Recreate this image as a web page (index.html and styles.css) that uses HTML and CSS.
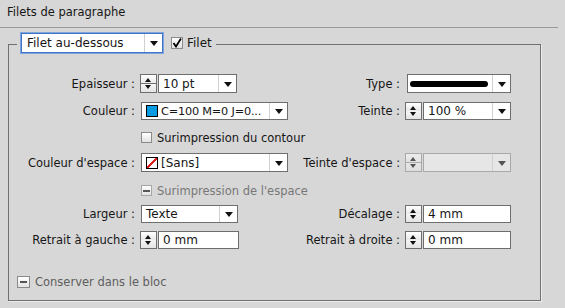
FILE: index.html
```html
<!DOCTYPE html>
<html lang="fr">
<head>
    <meta charset="UTF-8">
    <title>Filets de paragraphe</title>
    <link rel="stylesheet" href="styles.css">
</head>
<body>
    <div class="title">Filets de paragraphe</div>

    <div class="group">
        <div class="legend">
            <div class="select select-focus">
                <span class="select-text">Filet au-dessous</span>
                <span class="select-arrow"></span>
            </div>
            <span class="check">
                <svg width="10" height="10" viewBox="0 0 10 10"><path d="M1.5 5 L4 8.5 L9 0.5" fill="none" stroke="#000" stroke-width="1.8"/></svg>
            </span>
            <span class="legend-label">Filet</span>
        </div>

        <div class="row r1">
            <label class="lbl">Epaisseur :</label>
            <div class="ctl">
                <span class="spin"></span>
                <div class="select w-epaisseur">
                    <span class="select-text">10 pt</span>
                    <span class="select-arrow"></span>
                </div>
            </div>
            <label class="lbl">Type :</label>
            <div class="ctl">
                <div class="select w-type">
                    <span class="select-text"><span class="stroke-line"></span></span>
                    <span class="select-arrow"></span>
                </div>
            </div>
        </div>

        <div class="row r2">
            <label class="lbl">Couleur :</label>
            <div class="ctl">
                <div class="select w-couleur">
                    <span class="select-text"><span class="swatch swatch-cyan"></span><span class="swatch-name">C=100 M=0 J=0...</span></span>
                    <span class="select-arrow"></span>
                </div>
            </div>
            <label class="lbl">Teinte :</label>
            <div class="ctl">
                <span class="spin"></span>
                <div class="select w-teinte">
                    <span class="select-text">100 %</span>
                    <span class="select-arrow"></span>
                </div>
            </div>
        </div>

        <div class="row r3">
            <span></span>
            <div class="ctl ctl-wide">
                <span class="check"></span>
                <span class="check-label">Surimpression du contour</span>
            </div>
        </div>

        <div class="row r4">
            <label class="lbl">Couleur d'espace :</label>
            <div class="ctl">
                <div class="select w-couleur">
                    <span class="select-text"><span class="swatch swatch-none"></span>[Sans]</span>
                    <span class="select-arrow"></span>
                </div>
            </div>
            <label class="lbl">Teinte d'espace :</label>
            <div class="ctl">
                <span class="spin disabled"></span>
                <div class="select w-teinte disabled">
                    <span class="select-text"></span>
                    <span class="select-arrow"></span>
                </div>
            </div>
        </div>

        <div class="row r5">
            <span></span>
            <div class="ctl ctl-wide">
                <span class="check mixed disabled"></span>
                <span class="check-label muted">Surimpression de l'espace</span>
            </div>
        </div>

        <div class="row r6">
            <label class="lbl">Largeur :</label>
            <div class="ctl">
                <div class="select w-largeur">
                    <span class="select-text">Texte</span>
                    <span class="select-arrow"></span>
                </div>
            </div>
            <label class="lbl">Décalage :</label>
            <div class="ctl">
                <span class="spin"></span>
                <div class="field w-teinte">4 mm</div>
            </div>
        </div>

        <div class="row r7">
            <label class="lbl">Retrait à gauche :</label>
            <div class="ctl">
                <span class="spin"></span>
                <div class="field w-retrait">0 mm</div>
            </div>
            <label class="lbl">Retrait à droite :</label>
            <div class="ctl">
                <span class="spin"></span>
                <div class="field w-teinte">0 mm</div>
            </div>
        </div>

        <div class="keep">
            <span class="check mixed"></span>
            <span class="check-label muted">Conserver dans le bloc</span>
        </div>
    </div>
</body>
</html>
```

FILE: styles.css
```css
body {
    margin: 0;
    background-color: #d7d7d7;
    font-family: 'DejaVu Sans', 'Liberation Sans', sans-serif;
    font-size: 11.5px;
    color: #161616;
    width: 565px;
    height: 308px;
    overflow: hidden;
}

.title {
    line-height: 24px;
    padding-left: 7px;
    width: 558px;
    border-bottom: 1px solid #9a9a9a;
    box-sizing: border-box;
    height: 28px;
}

.group {
    margin: 16px 0 0 8px;
    width: 533px;
    height: 257px;
    box-sizing: border-box;
    border: 1px solid #707070;
    box-shadow: 1px 1px 0 #ececec;
}

.legend {
    display: flex;
    align-items: center;
    margin: -12px 0 0 8px;
    padding: 0 4px;
    background-color: #d7d7d7;
    width: max-content;
    height: 20px;
}

.legend-label {
    margin-left: 4px;
    font-size: 12px;
}

.legend .check {
    margin-left: 8px;
    width: 12px;
    height: 12px;
}

/* rows */
.row {
    display: grid;
    grid-template-columns: 126px 148px 107px 106px;
    column-gap: 5px;
    align-items: center;
}

.r1 { margin-top: 21px; height: 19px; }
.r2 { margin-top: 9px; height: 18px; }
.r3 { margin-top: 8px; height: 19px; }
.r4 { margin-top: 6px; height: 19px; }
.r5 { margin-top: 9px; height: 19px; }
.r6 { margin-top: 5px; height: 18px; }
.r7 { margin-top: 8px; height: 18px; }

.lbl {
    text-align: right;
    white-space: nowrap;
}

.ctl {
    display: flex;
    align-items: center;
    height: 100%;
}

.ctl-wide {
    grid-column: 2 / 5;
    padding-left: 1px;
}

/* selects and fields */
.select, .field {
    display: flex;
    height: 100%;
    box-sizing: border-box;
    border: 1px solid #6e6e6e;
    background-color: #fff;
    font-size: 12px;
    align-items: center;
}

.select-text {
    flex: 1;
    display: flex;
    align-items: center;
    padding-left: 4px;
    white-space: nowrap;
    overflow: hidden;
}

.select-arrow {
    width: 17px;
    height: 100%;
    border-left: 1px solid #d0d0d0;
    position: relative;
    flex: none;
}

.select-arrow::after {
    content: "";
    position: absolute;
    left: 5px;
    top: 50%;
    margin-top: -2px;
    border-left: 4px solid transparent;
    border-right: 4px solid transparent;
    border-top: 5px solid #111;
}

.select-focus {
    width: 142px;
    height: 20px;
    border: 1px solid #3f73c6;
    box-shadow: 0 0 0 1px #7fa5dc;
    font-size: 12px;
}

.select-focus .select-text {
    padding-left: 5px;
}

.field {
    padding-left: 4px;
}

.w-epaisseur { width: 79px; margin-left: 1px; }
.w-type { width: 104px; margin-left: 2px; }
.w-couleur { width: 147px; margin-left: 1px; }
.w-teinte { width: 88px; margin-left: 1px; }
.w-largeur { width: 97px; margin-left: 1px; }
.w-retrait { width: 81px; margin-left: 1px; }

.w-type .select-text {
    padding-left: 2px;
}

.stroke-line {
    display: block;
    width: 78px;
    height: 6px;
    border-radius: 3px;
    background-color: #000;
}

.swatch {
    width: 10px;
    height: 10px;
    border: 1px solid #000;
    margin-right: 3px;
    flex: none;
}

.swatch-name {
    font-size: 11.3px;
    letter-spacing: -0.2px;
}

.swatch-cyan {
    background-color: #0a9ce0;
}

.swatch-none {
    background: linear-gradient(to bottom right, #fff 43%, #e0201e 43%, #e0201e 57%, #fff 57%);
}

/* spinner */
.spin {
    width: 17px;
    height: 19px;
    box-sizing: border-box;
    border: 1px solid #6e6e6e;
    background: linear-gradient(#ffffff, #e8e8e8 49%, #6e6e6e 49%, #6e6e6e 53%, #f4f4f4 53%, #e4e4e4);
    position: relative;
    flex: none;
}

.r2 .spin, .r6 .spin, .r7 .spin {
    height: 18px;
}

.spin::before, .spin::after {
    content: "";
    position: absolute;
    left: 4px;
    border-left: 3.5px solid transparent;
    border-right: 3.5px solid transparent;
}

.spin::before {
    top: 3px;
    border-bottom: 4px solid #111;
}

.spin::after {
    bottom: 3px;
    border-top: 4px solid #111;
}

.spin.disabled {
    border-color: #a9a9a9;
    background: linear-gradient(#ececec, #e2e2e2 49%, #a9a9a9 49%, #a9a9a9 53%, #e6e6e6 53%, #dddddd);
}

.spin.disabled::before { border-bottom-color: #555; }
.spin.disabled::after { border-top-color: #555; }

.select.disabled {
    border-color: #a9a9a9;
    background-color: #e6e6e6;
}

.select.disabled .select-arrow::after {
    border-top-color: #555;
}

/* checkboxes */
.check {
    display: inline-flex;
    align-items: center;
    justify-content: center;
    width: 11px;
    height: 11px;
    box-sizing: border-box;
    border: 1px solid #8a8a8a;
    background: linear-gradient(#ffffff, #e2e2e2);
    flex: none;
}

.check.mixed::after {
    content: "";
    width: 7px;
    height: 2px;
    background-color: #555;
}

.check.disabled {
    border-color: #a5a5a5;
}

.check-label {
    margin-left: 5px;
    white-space: nowrap;
}

.muted {
    color: #5e5e5e;
}

.r5 .muted {
    color: #777;
}

.keep {
    display: flex;
    align-items: center;
    margin: 23px 0 0 8px;
    height: 19px;
}

.keep .check {
    width: 13px;
    height: 12px;
}
```
